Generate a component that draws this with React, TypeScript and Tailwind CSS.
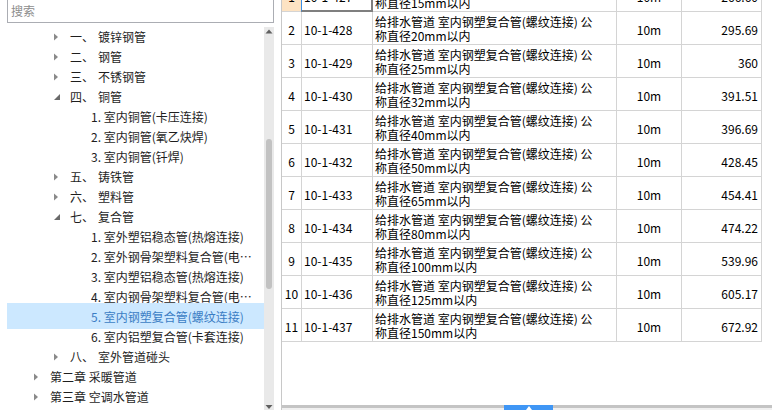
import React from 'react';

type TNode = { lvl: 1 | 2 | 3; arrow?: 'c' | 'e'; label?: string; name: string; sel?: boolean };

const tree: TNode[] = [
  { lvl: 2, arrow: 'c', label: '一、', name: '镀锌钢管' },
  { lvl: 2, arrow: 'c', label: '二、', name: '钢管' },
  { lvl: 2, arrow: 'c', label: '三、', name: '不锈钢管' },
  { lvl: 2, arrow: 'e', label: '四、', name: '铜管' },
  { lvl: 3, name: '1. 室内铜管(卡压连接)' },
  { lvl: 3, name: '2. 室内铜管(氧乙炔焊)' },
  { lvl: 3, name: '3. 室内铜管(钎焊)' },
  { lvl: 2, arrow: 'c', label: '五、', name: '铸铁管' },
  { lvl: 2, arrow: 'c', label: '六、', name: '塑料管' },
  { lvl: 2, arrow: 'e', label: '七、', name: '复合管' },
  { lvl: 3, name: '1. 室外塑铝稳态管(热熔连接)' },
  { lvl: 3, name: '2. 室外钢骨架塑料复合管(电熔连接)' },
  { lvl: 3, name: '3. 室内塑铝稳态管(热熔连接)' },
  { lvl: 3, name: '4. 室内钢骨架塑料复合管(电熔连接)' },
  { lvl: 3, name: '5. 室内钢塑复合管(螺纹连接)', sel: true },
  { lvl: 3, name: '6. 室内铝塑复合管(卡套连接)' },
  { lvl: 2, arrow: 'c', label: '八、', name: '室外管道碰头' },
  { lvl: 1, arrow: 'c', name: '第二章 采暖管道' },
  { lvl: 1, arrow: 'c', name: '第三章 空调水管道' },
];

const rows = [
  ['1', '10-1-427', '15', '266.60'],
  ['2', '10-1-428', '20', '295.69'],
  ['3', '10-1-429', '25', '360'],
  ['4', '10-1-430', '32', '391.51'],
  ['5', '10-1-431', '40', '396.69'],
  ['6', '10-1-432', '50', '428.45'],
  ['7', '10-1-433', '65', '454.41'],
  ['8', '10-1-434', '80', '474.22'],
  ['9', '10-1-435', '100', '539.96'],
  ['10', '10-1-436', '125', '605.17'],
  ['11', '10-1-437', '150', '672.92'],
];

const padByLvl: Record<number, string> = {
  1: 'pl-[26px]',
  2: 'pl-[46px]',
  3: 'pl-[84px]',
};

function Collapsed() {
  return (
    <svg width="17" height="20" className="shrink-0">
      <polygon points="1,6.5 5,10 1,13.5" fill="#8a8a8a" />
    </svg>
  );
}

function Expanded() {
  return (
    <svg width="17" height="20" className="shrink-0">
      <polygon points="7,7 7,13 1,13" fill="#6a6a6a" />
    </svg>
  );
}

function TreeRow({ n }: { n: TNode }) {
  return (
    <div
      className={`relative flex items-center h-[20px] whitespace-nowrap pr-[12px] ${padByLvl[n.lvl]} ${
        n.sel ? 'text-[#3b7dc4]' : 'text-[#1e1e1e]'
      }`}
    >
      {n.sel && <div className="absolute left-0 right-0 top-[-4px] bottom-[-2px] bg-[#cce8ff]" />}
      {n.arrow === 'c' && <Collapsed />}
      {n.arrow === 'e' && <Expanded />}
      {n.label && <span className="relative w-[28px] shrink-0">{n.label}</span>}
      <span className="relative min-w-0 overflow-hidden text-ellipsis whitespace-nowrap">{n.name}</span>
    </div>
  );
}

export default function App() {
  return (
    <div className="w-[772px] h-[410px] flex bg-white overflow-hidden font-['Noto_Sans_CJK_SC',sans-serif] text-[12px]">
      {/* Left panel */}
      <div className="w-[281px] shrink-0 flex flex-col px-[7px] h-full">
        <div className="h-[24px] -mt-px shrink-0 border border-[#abadb3] flex items-center pl-[3px] text-[#8d8d8d]">
          搜索
        </div>
        <div className="flex flex-1 mt-[4px] min-h-0">
          <div className="w-[257px] overflow-hidden">
            {tree.map((n, i) => (
              <TreeRow key={i} n={n} />
            ))}
          </div>
          <div className="w-[10px] bg-[#e9e9e9] flex flex-col items-center">
            <svg width="10" height="8" className="shrink-0">
              <polygon points="1.5,6.5 5,2.5 8.5,6.5" fill="#606060" />
            </svg>
            <div className="mt-[104px] h-[150px] w-[6px] rounded-full bg-[#c2c2c2]" />
            <div className="flex-1" />
            <svg width="10" height="8" className="shrink-0">
              <polygon points="1.5,3 5,7 8.5,3" fill="#606060" />
            </svg>
          </div>
        </div>
      </div>

      {/* Right panel */}
      <div className="flex-1 min-w-0 flex flex-col border-l border-[#c8c8c8] h-full">
        <div className="flex-1 overflow-hidden">
          <div className="-mt-[21px] w-[480px] text-black">
            {rows.map((r, i) => (
              <div key={i} className="flex h-[33px] border-b border-[#d4d4d4]">
                <div
                  className={`w-[20px] shrink-0 border-r border-[#d4d4d4] flex items-center justify-center pt-[3px] ${
                    i === 0 ? 'bg-[#fde3c3]' : ''
                  }`}
                >
                  {r[0]}
                </div>
                <div className="relative w-[71px] shrink-0 border-r border-[#d4d4d4] flex items-center pl-[2px] pt-[3px]">
                  {r[1]}
                  {i === 0 && (
                    <div className="absolute left-[-1px] top-[-1px] right-[-1px] bottom-[-1px] border-r-2 border-b-2 border-[#7f7f7f] border-l border-l-[#3a8ee6]" />
                  )}
                </div>
                <div className="w-[244px] shrink-0 border-r border-[#d4d4d4] pl-[2px] pt-[3px] leading-[14px] whitespace-nowrap overflow-hidden">
                  <div>给排水管道 室内钢塑复合管(螺纹连接) 公</div>
                  <div>称直径{r[2]}mm以内</div>
                </div>
                <div className="w-[65px] shrink-0 border-r border-[#d4d4d4] flex items-center justify-center pt-[3px]">
                  10m
                </div>
                <div className="w-[80px] shrink-0 border-r border-[#d4d4d4] flex items-center justify-end pr-[3px] pt-[3px]">
                  {r[3]}
                </div>
              </div>
            ))}
          </div>
        </div>
        <div className="h-[5px] shrink-0 flex">
          <div className="w-[222px] flex flex-col">
            <div className="h-[3px] bg-[#c4c4c4]" />
            <div className="h-[2px] bg-[#f0f0f0]" />
          </div>
          <div className="w-[49px] bg-[#3f96f5] flex justify-center items-end">
            <svg width="6" height="4">
              <polygon points="0,4 3,0 6,4" fill="#ffffff" />
            </svg>
          </div>
          <div className="flex-1 flex flex-col">
            <div className="h-[3px] bg-[#c4c4c4]" />
            <div className="h-[2px] bg-[#f0f0f0]" />
          </div>
        </div>
      </div>
    </div>
  );
}
